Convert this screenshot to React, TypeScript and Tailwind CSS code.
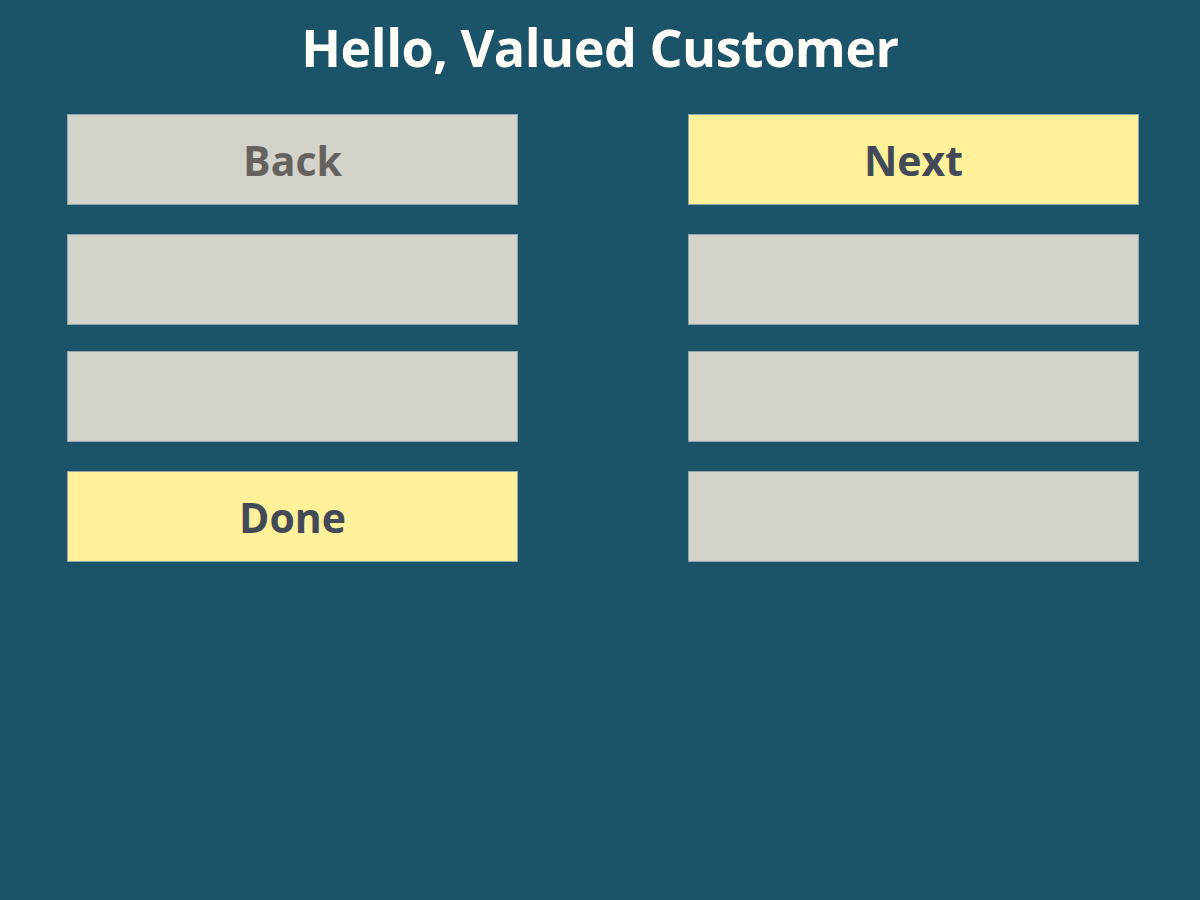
import React from 'react';

type Btn = { label?: string; tone: 'gray' | 'yellow'; mt: string };

const left: Btn[] = [
  { label: 'Back', tone: 'gray', mt: 'mt-0' },
  { tone: 'gray', mt: 'mt-[29px]' },
  { tone: 'gray', mt: 'mt-[26px]' },
  { label: 'Done', tone: 'yellow', mt: 'mt-[29px]' },
];

const right: Btn[] = [
  { label: 'Next', tone: 'yellow', mt: 'mt-0' },
  { tone: 'gray', mt: 'mt-[29px]' },
  { tone: 'gray', mt: 'mt-[26px]' },
  { tone: 'gray', mt: 'mt-[29px]' },
];

function Button({ label, tone, mt }: Btn) {
  return (
    <button
      className={
        mt +
        ' h-[91px] w-[451px] border border-[#8fa9ae] flex items-center justify-center pt-[2px] text-[41px] font-bold ' +
        (tone === 'yellow' ? 'bg-[#fff09a] text-[#434a57]' : 'bg-[#d3d3cb] text-[#66635e]')
      }
    >
      {label}
    </button>
  );
}

export default function App() {
  return (
    <div
      className="w-[1200px] h-[900px] bg-[#1b5469] overflow-hidden"
      style={{ fontFamily: '"Open Sans", "Noto Sans", sans-serif' }}
    >
      <h1 className="pt-[14px] h-[114px] text-center text-[52px] leading-[66px] font-bold text-[#fffdf7] tracking-[-0.5px]">
        Hello, Valued Customer
      </h1>
      <div className="ml-[67px] flex gap-[170px]">
        <div className="flex flex-col">
          {left.map((b, i) => (
            <Button key={i} {...b} />
          ))}
        </div>
        <div className="flex flex-col">
          {right.map((b, i) => (
            <Button key={i} {...b} />
          ))}
        </div>
      </div>
    </div>
  );
}
